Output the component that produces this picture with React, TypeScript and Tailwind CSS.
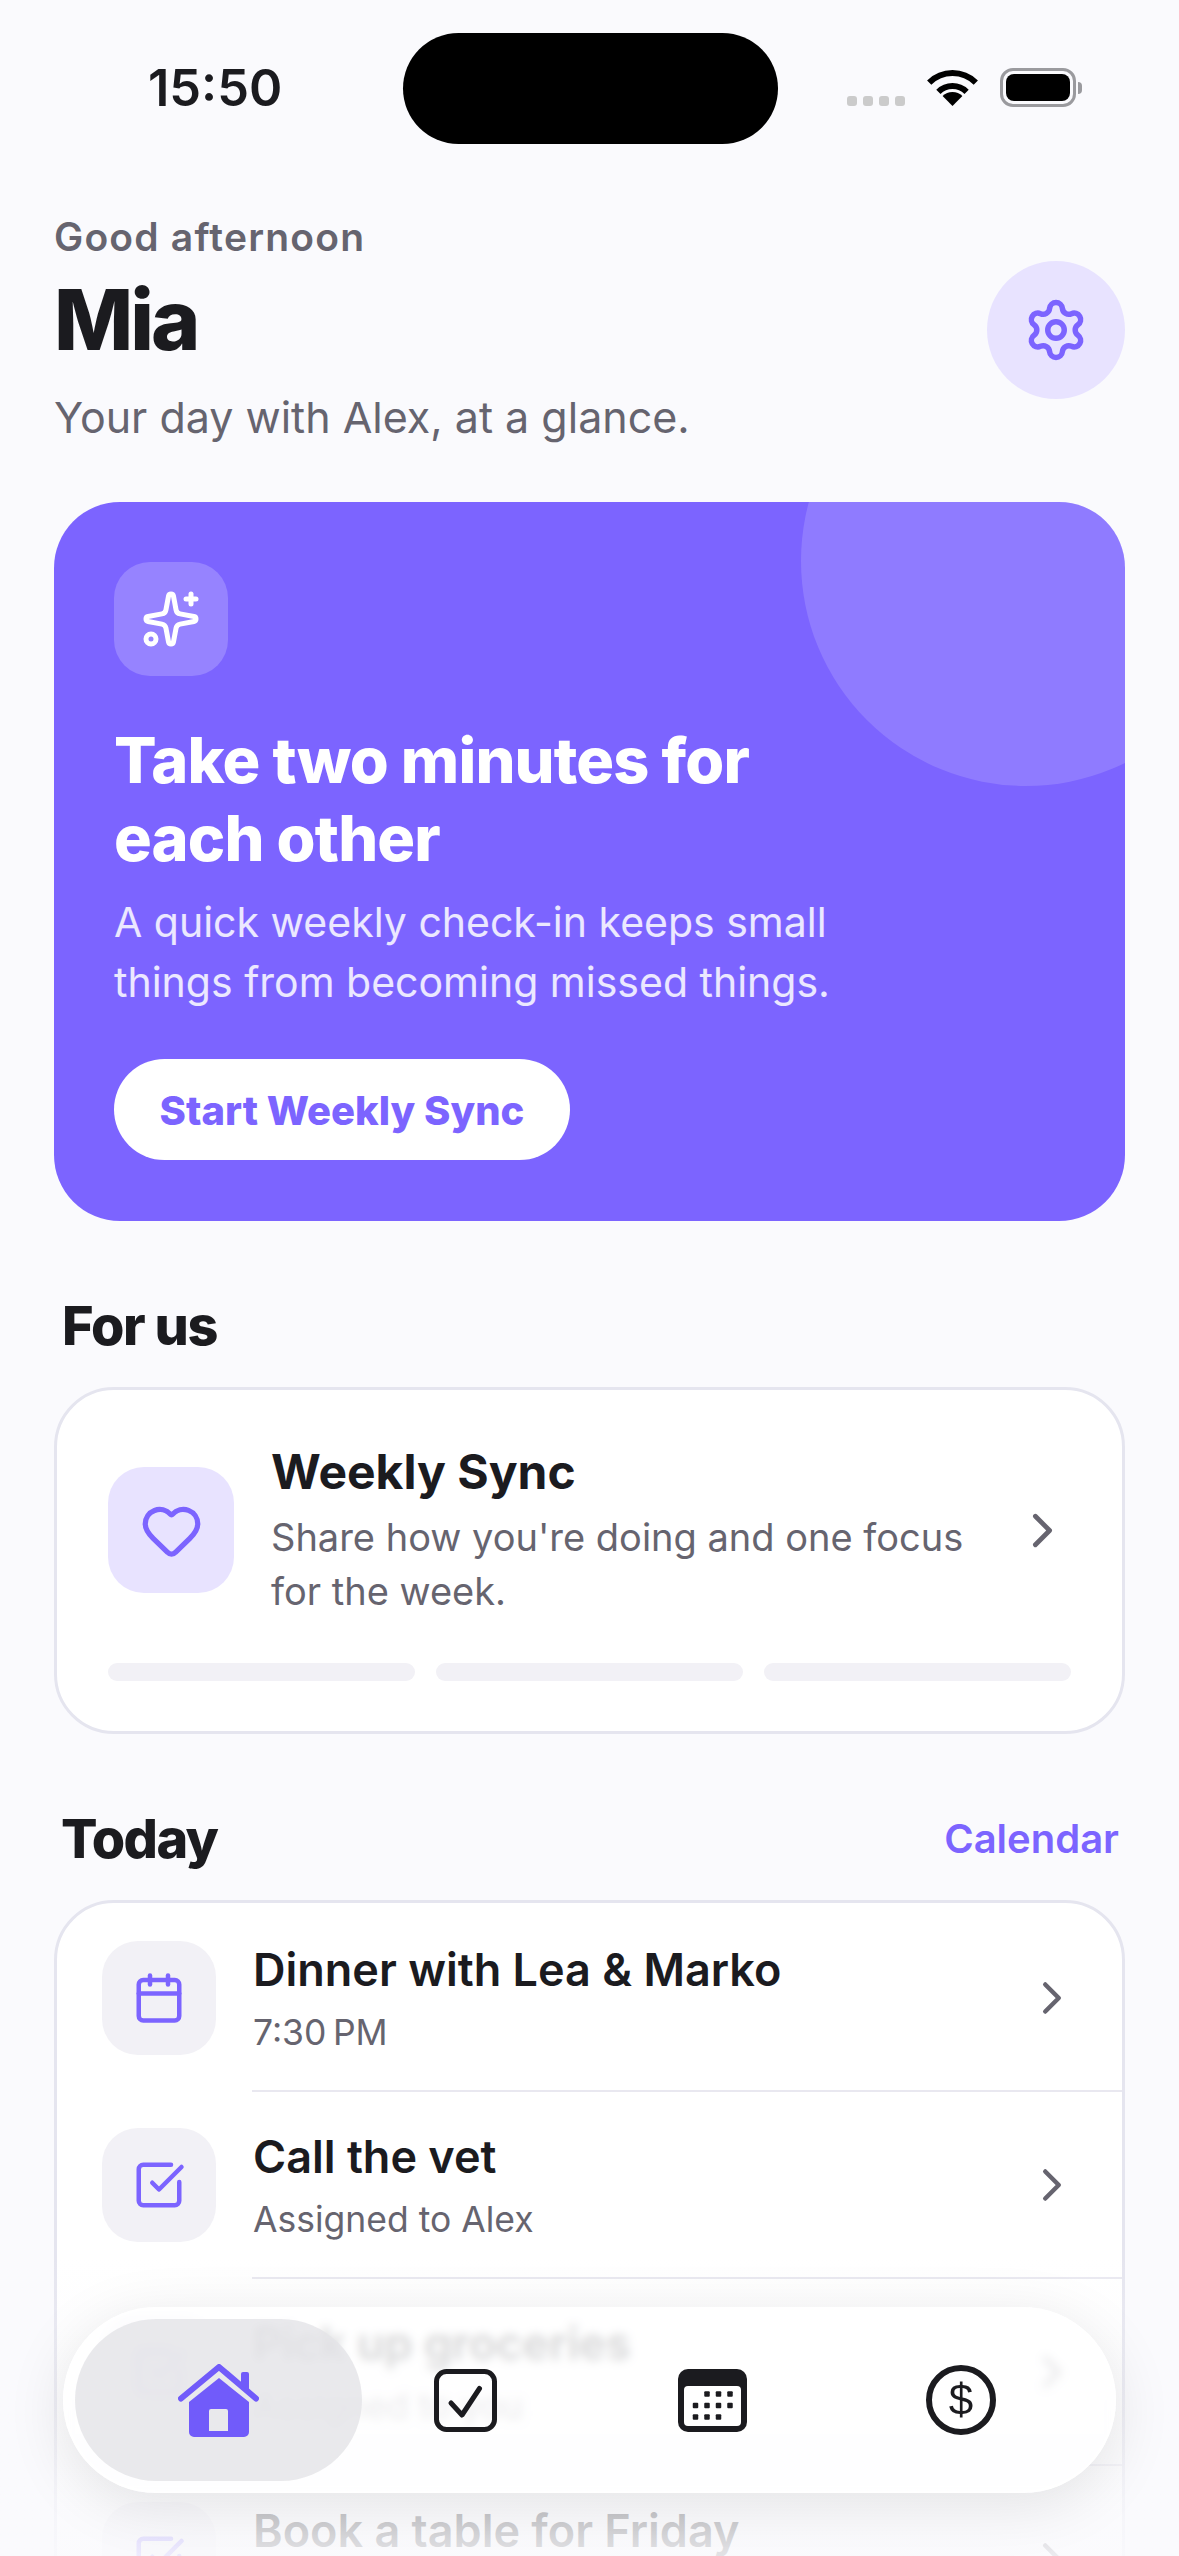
import { Calendar, ChevronRight, Heart, Settings, Sparkles, SquareCheckBig } from 'lucide-react';

const rows = [
  { title: 'Dinner with Lea & Marko', sub: '7:30\u202FPM', kind: 'event' },
  { title: 'Call the vet', sub: 'Assigned to Alex', kind: 'task' },
  { title: 'Pick up groceries', sub: 'Assigned to you', kind: 'task' },
  { title: 'Book a table for Friday', sub: '', kind: 'task' },
];

function WifiIcon() {
  return (
    <svg width="51" height="37" viewBox="0 0 51 37" fill="none">
      <path d="M25.5 37L15.6 27.1A14 14 0 0 1 35.4 27.1Z" fill="#000" />
      <path d="M11.4 22.9A20 20 0 0 1 39.6 22.9" stroke="#000" strokeWidth="6" />
      <path d="M2.2 13.7A33 33 0 0 1 48.8 13.7" stroke="#000" strokeWidth="6" />
    </svg>
  );
}

function HomeIcon() {
  return (
    <svg width="81" height="73" viewBox="0 0 81 73" fill="none">
      <path d="M3 34.5L41 3L78 34.5" stroke="#715BFA" strokeWidth="6" strokeLinecap="round" strokeLinejoin="round" />
      <path d="M63 21V10a2 2 0 0 1 2-2h4a2 2 0 0 1 2 2v18Z" fill="#715BFA" />
      <path
        fillRule="evenodd"
        d="M41 14L71 38V68a5 5 0 0 1-5 5H16a5 5 0 0 1-5-5V38ZM31 47a2 2 0 0 1 2-2h15a2 2 0 0 1 2 2V67H31Z"
        fill="#715BFA"
      />
    </svg>
  );
}

function CheckIcon() {
  return (
    <svg width="63" height="63" viewBox="0 0 63 63" fill="none">
      <rect x="2.5" y="2.5" width="58" height="58" rx="10" stroke="#1B1B1F" strokeWidth="5" />
      <path d="M17 34L28 46L45.5 19.5" stroke="#1B1B1F" strokeWidth="5" strokeLinecap="round" strokeLinejoin="round" />
    </svg>
  );
}

function CalendarGridIcon() {
  const dots = [
    [29, 25], [40.5, 25], [52, 25],
    [17.5, 36.5], [29, 36.5], [40.5, 36.5], [52, 36.5],
    [17.5, 48], [29, 48], [40.5, 48],
  ];
  return (
    <svg width="69" height="63" viewBox="0 0 69 63" fill="none">
      <rect width="69" height="63" rx="10" fill="#1B1B1F" />
      <rect x="6" y="17" width="57" height="40" rx="4" fill="#fff" />
      {dots.map(([x, y]) => (
        <rect key={`${x}-${y}`} x={x - 2.75} y={y - 2.75} width="5.5" height="5.5" rx="1" fill="#1B1B1F" />
      ))}
    </svg>
  );
}

export default function App() {
  return (
    <div className="relative h-[2556px] w-[1179px] overflow-hidden bg-[#FAFAFD] font-['Inter',sans-serif] text-[#1B1B1F]">
      {/* status bar */}
      <div className="relative flex h-[213px] items-start pt-[33px]">
        <div className="ml-[148px] mt-[25px] text-[50.5px] font-semibold leading-[60px]">15:50</div>
        <div className="ml-[121px] h-[111px] w-[375px] rounded-full bg-black" />
        <div className="ml-[69px] mt-[63px] flex gap-[6px]">
          <div className="h-[10px] w-[10px] rounded-[3px] bg-[#CBCBCB]" />
          <div className="h-[10px] w-[10px] rounded-[3px] bg-[#CBCBCB]" />
          <div className="h-[10px] w-[10px] rounded-[3px] bg-[#CBCBCB]" />
          <div className="h-[10px] w-[10px] rounded-[3px] bg-[#CBCBCB]" />
        </div>
        <div className="ml-[22px] mt-[36px]">
          <WifiIcon />
        </div>
        <div className="ml-[22px] mt-[35px] flex items-center">
          <div className="h-[39px] w-[76px] rounded-[13px] border-[3px] border-[#9A9A9E] p-[3px]">
            <div className="h-full w-full rounded-[8px] bg-black" />
          </div>
          <div className="ml-[2px] h-[12px] w-[4px] rounded-r-full bg-[#9A9A9E]" />
        </div>
      </div>

      {/* header */}
      <div className="flex items-center justify-between px-[54px]">
        <div>
          <div className="text-[39px] font-semibold leading-[48px] tracking-[1.2px] text-[#66646F]">Good afternoon</div>
          <div className="mt-[11px] text-[84px] font-extrabold leading-[96px] tracking-[-3px]">Mia</div>
          <div className="mt-[22px] text-[43px] leading-[54px] text-[#66646F]">Your day with Alex, at a glance.</div>
        </div>
        <div className="mt-[3px] flex h-[138px] w-[138px] items-center justify-center rounded-full bg-[#E8E3FF] text-[#7C64FF]">
          <Settings size={66} strokeWidth={2} />
        </div>
      </div>

      {/* hero */}
      <div className="relative mx-[54px] mt-[58px] h-[719px] overflow-hidden rounded-[66px] bg-[#7C64FF] px-[60px] pt-[60px] text-white">
        <div className="absolute left-[747px] top-[-166px] h-[450px] w-[450px] rounded-full bg-white/15" />
        <div className="relative">
          <div className="flex h-[114px] w-[114px] items-center justify-center rounded-[36px] bg-white/20">
            <Sparkles size={60} strokeWidth={2} />
          </div>
          <div className="mt-[45px] text-[63px] font-extrabold leading-[78px] tracking-[-0.85px]">
            Take two minutes for
            <br />
            each other
          </div>
          <div className="mt-[15px] text-[41px] leading-[60px] text-white/85">
            A quick weekly check-in keeps small
            <br />
            things from becoming missed things.
          </div>
          <div className="mt-[47px] flex h-[101px] w-[456px] items-center justify-center rounded-full bg-white pt-[3px] text-[40px] font-extrabold text-[#7C64FF]">
            Start Weekly Sync
          </div>
        </div>
      </div>

      {/* for us */}
      <div className="mx-[54px] mt-[75px]">
        <div className="px-[8px] text-[54px] font-extrabold leading-[60px] tracking-[-1.4px]">For us</div>
        <div className="mt-[31px] rounded-[60px] border-[3px] border-[#E5E5EF] bg-white px-[51px] pb-[50px] pt-[52px]">
          <div className="flex items-center">
            <div className="flex h-[126px] w-[126px] shrink-0 items-center justify-center rounded-[36px] bg-[#E8E3FF] text-[#7C64FF]">
              <Heart size={63} strokeWidth={2} />
            </div>
            <div className="ml-[37px] flex-1">
              <div className="text-[48px] font-bold leading-[60px]">Weekly Sync</div>
              <div className="mt-[8px] text-[38px] leading-[54px] text-[#66646F]">
                Share how you're doing and one focus
                <br />
                for the week.
              </div>
            </div>
            <ChevronRight size={57} strokeWidth={2} className="text-[#66646F]" />
          </div>
          <div className="mt-[45px] flex gap-[21px]">
            <div className="h-[18px] flex-1 rounded-[9px] bg-[#F2F1F6]" />
            <div className="h-[18px] flex-1 rounded-[9px] bg-[#F2F1F6]" />
            <div className="h-[18px] flex-1 rounded-[9px] bg-[#F2F1F6]" />
          </div>
        </div>
      </div>

      {/* today */}
      <div className="mx-[54px] mt-[75px]">
        <div className="flex items-center justify-between pl-[7px] pr-[6px]">
          <div className="text-[54px] font-extrabold leading-[60px] tracking-[-1.6px]">Today</div>
          <div className="text-[40px] font-semibold leading-[60px] text-[#7C64FF]">Calendar</div>
        </div>
        <div className="mt-[31px] rounded-[60px] border-[3px] border-[#E5E5EF] bg-white pt-[2px]">
          {rows.map((row, i) => (
            <div key={row.title}>
              {i > 0 && <div className="ml-[195px] h-[2px] bg-[#E9E8F0]" />}
              <div className="flex h-[185px] items-center pl-[45px] pr-[43px]">
                <div className="flex h-[114px] w-[114px] shrink-0 items-center justify-center rounded-[36px] bg-[#F2F1F6] text-[#7C64FF]">
                  {row.kind === 'event' ? <Calendar size={54} strokeWidth={2} /> : <SquareCheckBig size={54} strokeWidth={2} />}
                </div>
                <div className="ml-[37px] flex-1 pt-[5px]">
                  <div className="text-[45px] font-semibold leading-[54px]">{row.title}</div>
                  <div className="mt-[12px] h-[48px] text-[35.5px] leading-[48px] text-[#66646F]">{row.sub}</div>
                </div>
                <ChevronRight size={54} strokeWidth={2} className="text-[#66646F]" />
              </div>
            </div>
          ))}
        </div>
      </div>

      {/* bottom fade */}
      <div className="absolute inset-x-0 bottom-0 h-[300px] bg-gradient-to-b from-[#FAFAFD]/0 to-[#FAFAFD]/90" />

      {/* tab bar */}
      <div className="absolute left-[63px] top-[2307px] flex h-[186px] w-[1053px] items-center rounded-full border-[2px] border-white/70 bg-white/75 pl-[10px] shadow-[0_12px_60px_rgba(0,0,0,0.1)] backdrop-blur-[5px]">
        <div className="flex h-[162px] w-[287px] shrink-0 items-center justify-center rounded-full bg-[#E4E4E7]/80">
          <HomeIcon />
        </div>
        <div className="ml-[72px]">
          <CheckIcon />
        </div>
        <div className="ml-[181px]">
          <CalendarGridIcon />
        </div>
        <div className="ml-[179px] flex h-[70px] w-[70px] items-center justify-center rounded-full border-[6px] border-[#1B1B1F] font-['Liberation_Sans',sans-serif] text-[44px] leading-none">
          $
        </div>
      </div>
    </div>
  );
}
